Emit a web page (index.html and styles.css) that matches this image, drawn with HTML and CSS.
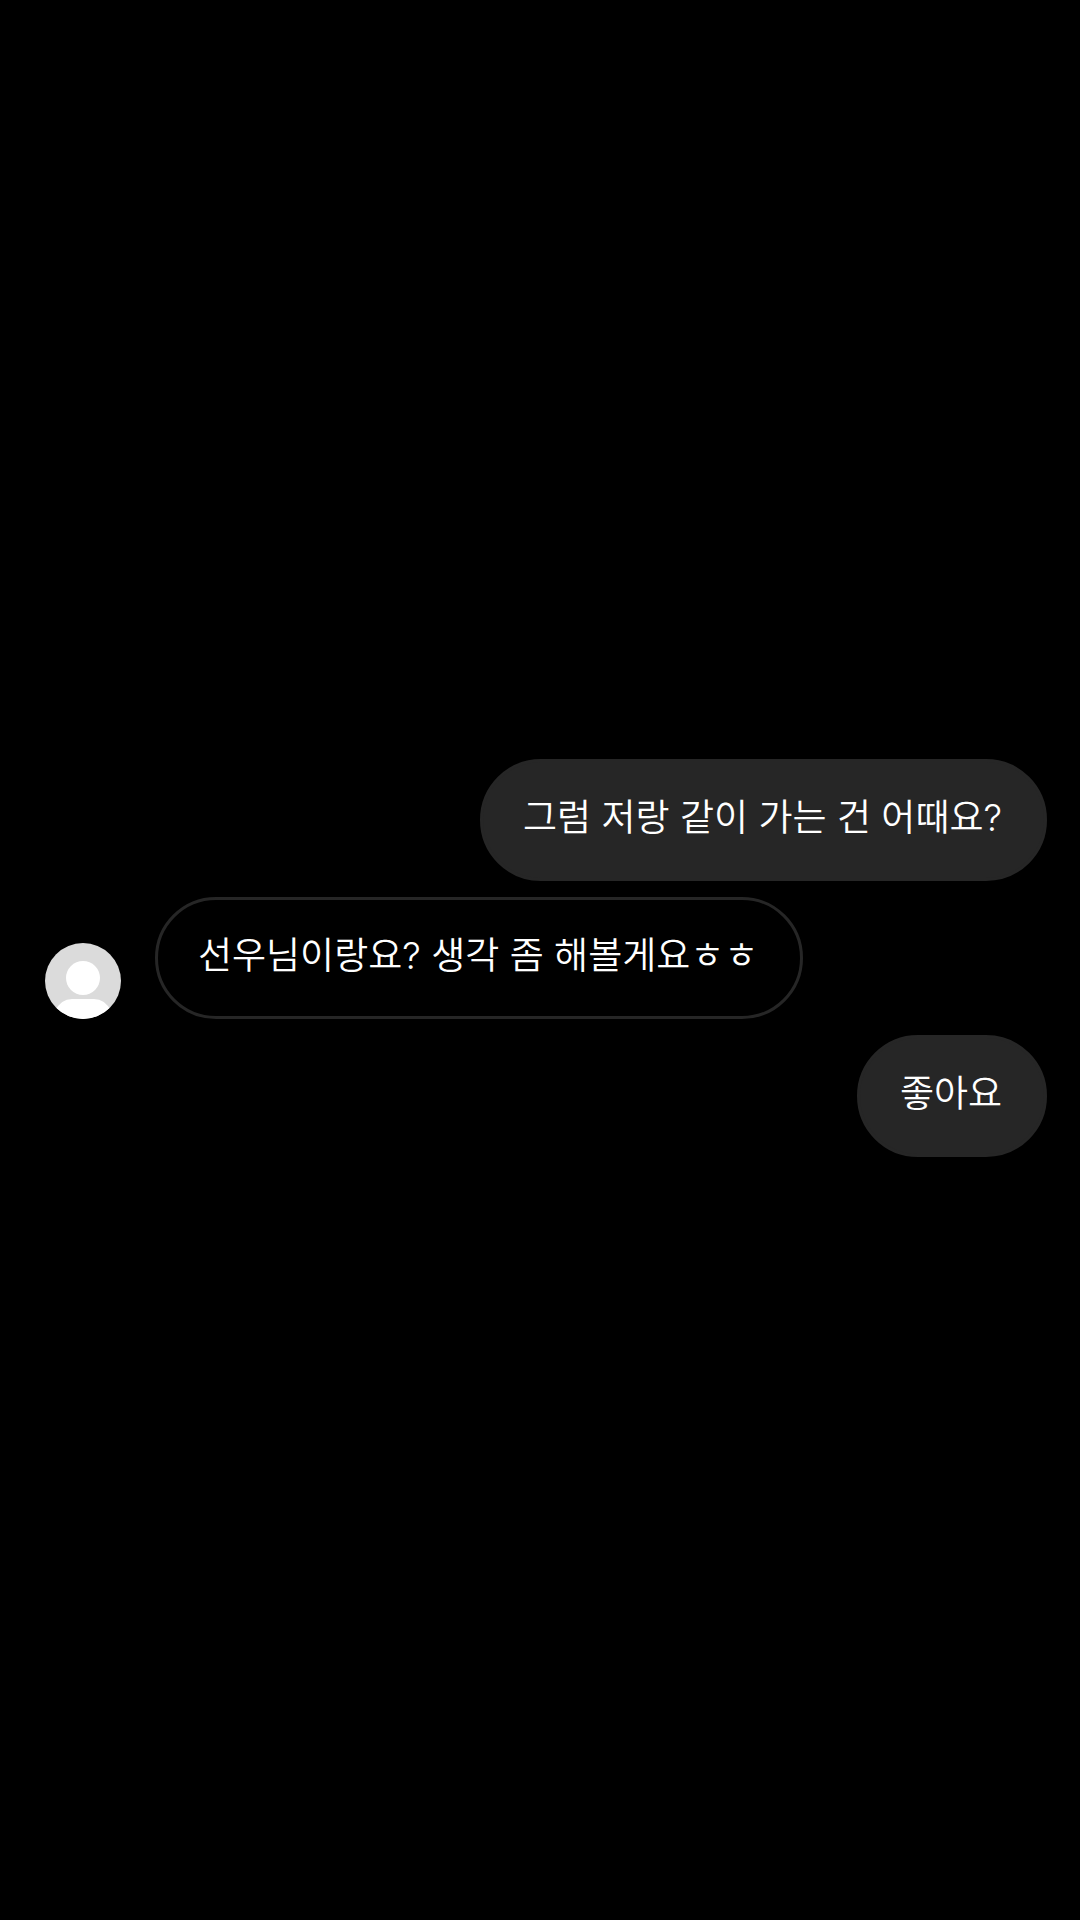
FILE: index.html
```html
<!DOCTYPE html>
<html lang="ko">
<head>
    <meta charset="UTF-8">
    <meta name="viewport" content="width=device-width, initial-scale=1.0">
    <title>Chat</title>
    <link rel="stylesheet" href="styles.css">
</head>
<body>
    <main class="chat">
        <div class="message sent">
            <p class="bubble">그럼 저랑 같이 가는 건 어때요?</p>
        </div>
        <div class="message received">
            <svg class="avatar" viewBox="0 0 76 76" role="img" aria-label="Profile">
                <defs>
                    <clipPath id="avatar-clip"><circle cx="38" cy="38" r="38"/></clipPath>
                </defs>
                <g clip-path="url(#avatar-clip)">
                    <rect width="76" height="76" fill="#dbdbdb"/>
                    <circle cx="38" cy="35" r="17" fill="#fff"/>
                    <path d="M10 76V68Q16 56 27 56H49Q60 56 66 68V76Z" fill="#fff"/>
                </g>
            </svg>
            <p class="bubble">선우님이랑요? 생각 좀 해볼게요ㅎㅎ</p>
        </div>
        <div class="message sent">
            <p class="bubble">좋아요</p>
        </div>
    </main>
</body>
</html>
```
FILE: styles.css
```css
* {
    box-sizing: border-box;
}
body {
    margin: 0;
    background-color: #000;
    color: #fff;
    font-family: Inter, "Noto Sans CJK KR", sans-serif;
    font-weight: 350;
}
.chat {
    min-height: 100vh;
    padding: 0 33px 4px 45px;
    display: flex;
    flex-direction: column;
    justify-content: center;
    gap: 16px;
}
.message {
    display: flex;
    align-items: flex-end;
}
.sent {
    justify-content: flex-end;
}
.received {
    gap: 34px;
}
.avatar {
    flex: none;
    width: 76px;
    height: 76px;
}
.bubble {
    margin: 0;
    padding: 32px 42px 36px 40px;
    border: 3px solid #262626;
    border-radius: 61px;
    font-size: 37px;
    line-height: 48px;
}
.sent .bubble {
    background-color: #262626;
}
```
